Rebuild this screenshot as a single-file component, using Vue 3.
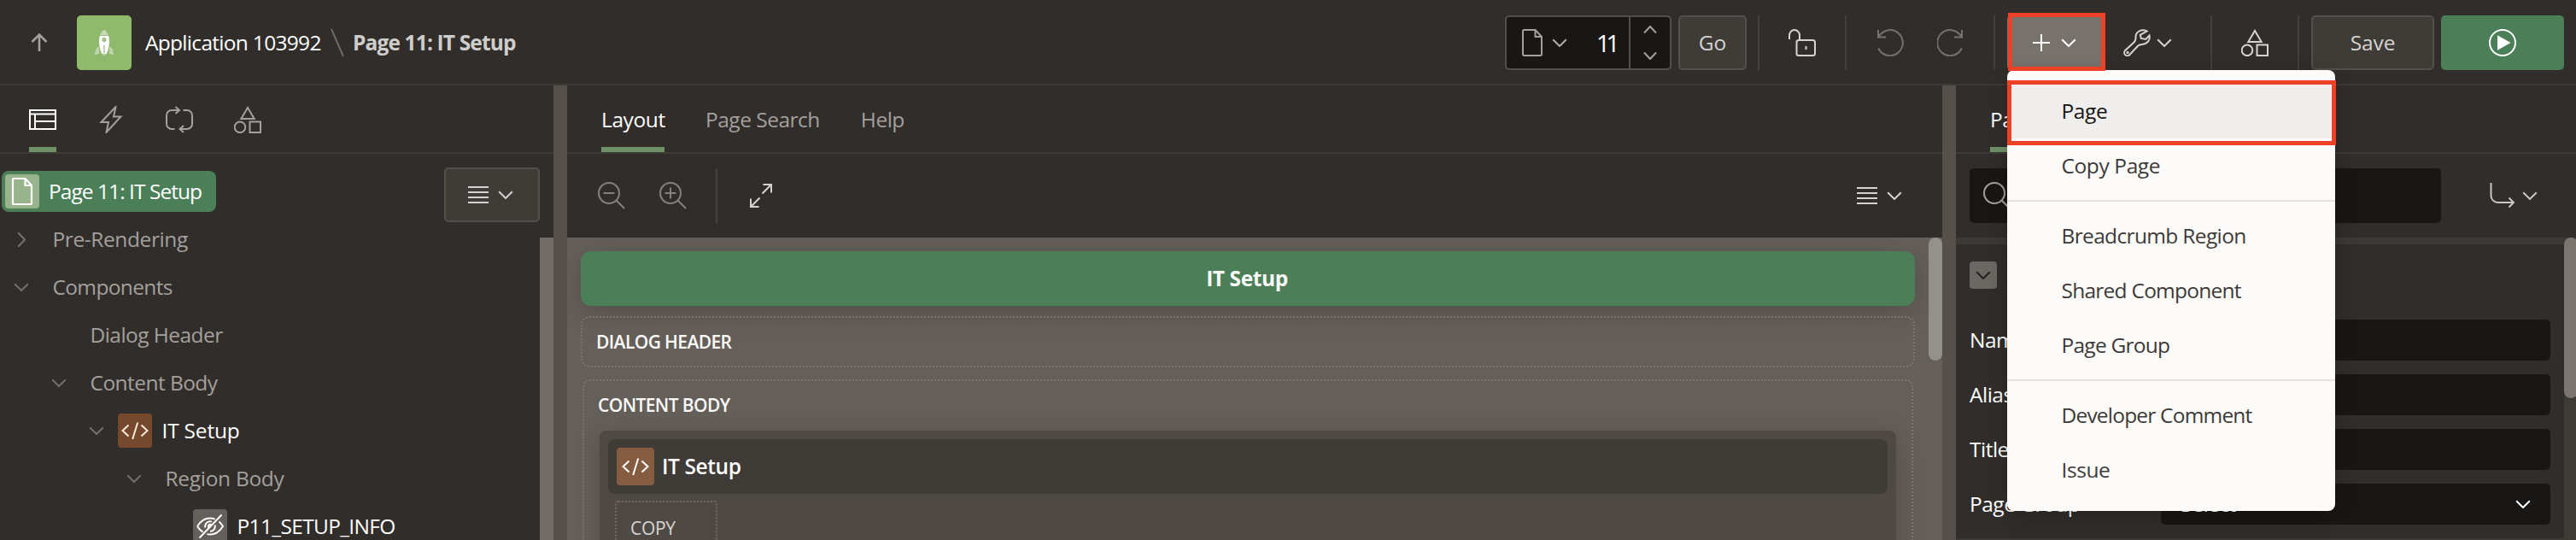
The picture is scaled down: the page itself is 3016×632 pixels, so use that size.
<script setup>
import { h } from 'vue'

const glyphs = {
  up: '<path d="M10 21V2M1.5 10 10 1.5l8.5 8.5"/>',
  down: '<path d="M1.2 1.2 9 9l7.8-7.8"/>',
  right: '<path d="M1.2 1.2 9 9.5l-7.8 8.3"/>',
  layout: '<path d="M1 5h30v22H1zM1 9.5h30M7 9.5V27M7 18h24"/>',
  bolt: '<path d="M21.5 1 4.5 19H13l-2.5 12L27.5 12.5H19z"/>',
  cycle: '<path d="M10.5 27H7a6 6 0 0 1-6-6V11a6 6 0 0 1 6-6h9M11.5 1 16 5l-4.5 4M20.5 5H25a6 6 0 0 1 6 6v10a6 6 0 0 1-6 6h-8.5M21 23l-4.5 4 4.5 4"/>',
  shapes: '<path d="M16 2 8.3 15h15.4zM18.500 18.500H31V31H18.500z"/><circle cx="7" cy="24.800" r="6.300"/>',
  page: '<path d="M19.500 1H6.200A1.200 1.200 0 0 0 5 2.200v27.600A1.200 1.200 0 0 0 6.200 31h19.600a1.200 1.200 0 0 0 1.200-1.200V9zM19.500 1v8H27"/>',
  lines: '<path d="M0 7h24M0 13h24M0 19h24M0 25h24"/>',
  unlock: '<path d="M1 12V7.500a6 6.500 0 0 1 12 0V13M20.500 20v4"/><rect x="9.500" y="13" width="21.500" height="18" rx="2.500"/>',
  undo: '<path d="M1 1v8.500h9M1.600 9A15 15 0 1 1 1.200 22.500"/>',
  redo: '<path d="M29 1v8.500h-9M28.400 9A15 15 0 1 0 28.800 22.500"/>',
  plus: '<path d="M10 0v20M0 10h20"/>',
  wrench: '<path d="M27.500 2.500C22 -.5 14 2.500 14.500 10c.2 3-.5 4-2 5.500L2.200 25a3.600 3.600 0 0 0 5 5.200L17 19.800c1.500-1.500 2.500-1.800 5-1.900 6.500-.3 9.800-5.400 8.500-10.400L26.200 12l-5.400-1-1-4.200z"/><circle cx="5" cy="27.500" r=".7"/>',
  play: '<circle cx="16" cy="16" r="15"/><path d="M11 9v14l12.500-7z" fill="currentColor"/>',
  zoomOut: '<circle cx="13" cy="13" r="12"/><path d="M21.800 21.800 31 31M6.500 13h13"/>',
  zoomIn: '<circle cx="13" cy="13" r="12"/><path d="M21.800 21.800 31 31M6.500 13h13M13 6.500v13"/>',
  search: '<circle cx="13" cy="13" r="12"/><path d="M21.800 21.800 31 31"/>',
  expand: '<path d="M17.500 13.500 28 3M18.500 3H28v9.500M14.500 18.500 4 29M4 19.500V29h9.500"/>',
  code: '<path d="M8.500 9.500 1.500 16l7 6.500M23.500 9.500l7 6.500-7 6.500M19.200 6.500l-6 19.500"/>',
  hidden: '<path d="M1 16C5 9.500 10 6.500 16 6.500c2 0 4 .4 5.700 1.100M26.500 10.500c1.700 1.500 3.200 3.300 4.500 5.500-4 6.500-9 9.500-15 9.500-1.200 0-2.400-.1-3.500-.4M7.500 22.700C5 21.200 2.800 18.900 1 16M21.600 14.500A5.800 5.800 0 0 1 16 21.800M10.400 17.500A5.800 5.800 0 0 1 18 10.600M14.600 17.600a2 2 0 0 1 2.600-3.100M3.500 29.500l26-27"/>',
  goto: '<path d="M1.500 1v15a8 8 0 0 0 8 8H28M22.500 18.500 28 24l-5.500 5.500"/>'
}
const sizes = { up: [20, 22], down: [18, 10], right: [10, 19], plus: [20, 20], lines: [24, 32] }
const Icon = ({ name }) => {
  const [w, ht] = sizes[name] || [32, 32]
  return h('svg', {
    width: w, height: ht, viewBox: `0 0 ${w} ${ht}`, fill: 'none', stroke: 'currentColor',
    'stroke-width': 2, innerHTML: glyphs[name]
  })
}
Icon.props = ['name']

// indent: left edge of the disclosure arrow column; ls: tracking in px
const tree = [
  { label: 'Pre-Rendering', indent: 8, arrow: 'right', ls: -0.4 },
  { label: 'Components', indent: 8, arrow: 'down', ls: -0.65 },
  { label: 'Dialog Header', indent: 52, arrow: '', ls: -0.55 },
  { label: 'Content Body', indent: 52, arrow: 'down', ls: -0.55 },
  { label: 'IT Setup', indent: 96, arrow: 'down', icon: 'code', ls: -0.2 },
  { label: 'Region Body', indent: 140, arrow: 'down', ls: -0.3 },
  { label: 'P11_SETUP_INFO', indent: 184, arrow: '', icon: 'hidden', ls: -0.65 }
]
const menu = [
  [{ label: 'Page', ls: -0.4, active: true }, { label: 'Copy Page', ls: -0.4 }],
  [{ label: 'Breadcrumb Region', ls: -0.65 }, { label: 'Shared Component', ls: -0.75 }, { label: 'Page Group', ls: -0.75 }],
  [{ label: 'Developer Comment', ls: -0.8 }, { label: 'Issue', ls: -0.4 }]
]
const fields = [{ label: 'Name' }, { label: 'Alias' }, { label: 'Title' }, { label: 'Page Group', value: '- Select -' }]
</script>

<template>
  <div class="builder">
    <header class="topbar">
      <Icon name="up" class="up" />
      <span class="app-icon">
        <svg width="32" height="32" viewBox="0 0 32 32">
          <path d="M16 0c3 2.500 4.700 5 5.500 7.500h-11C11.300 5 13 2.500 16 0z" fill="#c7dab6" stroke="#7fa65e" stroke-width=".6" />
          <path d="M10 19c-3 2.500-5.500 5-5.700 12.500l6.700-2.500zM22 19c3 2.500 5.500 5 5.700 12.500L21 29zM13.500 27h5l-.5 4.500h-4z" fill="#bdd4a9" stroke="#7fa65e" stroke-width=".6" />
          <path d="M10.500 7.500h11C23 14 22.500 22 19 29.500h-6C9.500 22 9 14 10.500 7.500z" fill="#fff" stroke="#7fa65e" stroke-width=".6" />
          <circle cx="16" cy="12.500" r="2" fill="#b3cf9b" stroke="#7fa65e" />
          <path d="M16 19v9" stroke="#7fa65e" />
        </svg>
      </span>
      <span class="app-name">Application 103992</span>
      <svg class="slash" width="16" height="34" viewBox="0 0 16 34"><path d="M1 1l14 32" /></svg>
      <span class="page-name">Page 11: IT Setup</span>

      <div class="tools">
        <div class="selector">
          <Icon name="page" /><Icon name="down" class="sel-caret" />
          <span class="num">11</span>
          <div class="spin"><svg width="16" height="40" viewBox="0 0 16 40"><path d="M1 8.500 8 1l7 7.500M1 31.500 8 39l7-7.500" /></svg></div>
        </div>
        <button class="btn go">Go</button>
        <div class="seg lock"><Icon name="unlock" /></div>
        <div class="seg history"><Icon name="undo" /><Icon name="redo" /></div>
        <div class="seg create">
          <button class="plus"><Icon name="plus" /><Icon name="down" /></button>
          <Icon name="wrench" class="wrench" /><Icon name="down" />
        </div>
        <div class="seg shared"><Icon name="shapes" /></div>
        <div class="seg actions">
          <button class="btn save">Save</button>
          <button class="run"><Icon name="play" /></button>
        </div>
      </div>
    </header>

    <main class="panes">
      <section class="pane left">
        <nav class="tabs icons">
          <span class="tab on"><Icon name="layout" /></span>
          <span class="tab"><Icon name="bolt" /></span>
          <span class="tab"><Icon name="cycle" /></span>
          <span class="tab"><Icon name="shapes" /></span>
        </nav>
        <div class="tree-area">
          <div class="tree-head">
            <div class="selected"><span class="badge doc"><Icon name="page" /></span>Page 11: IT Setup</div>
            <button class="btn list"><Icon name="lines" /><Icon name="down" /></button>
          </div>
          <div v-for="n in tree" :key="n.label" class="node" :class="{ real: n.icon }" :style="{ paddingLeft: n.indent + 'px', letterSpacing: n.ls + 'px' }">
            <span class="arrow"><Icon v-if="n.arrow" :name="n.arrow" /></span>
            <span v-if="n.icon" class="badge" :class="n.icon"><Icon :name="n.icon" /></span>
            <span class="label">{{ n.label }}</span>
          </div>
          <div class="left-scroll"></div>
        </div>
      </section>

      <div class="splitter"></div>

      <section class="pane center">
        <nav class="tabs">
          <span class="tab on layout-tab">Layout</span>
          <span class="tab">Page Search</span>
          <span class="tab">Help</span>
        </nav>
        <div class="toolbar">
          <Icon name="zoomOut" class="dim" /><Icon name="zoomIn" class="dim" />
          <i class="rule"></i>
          <Icon name="expand" />
          <span class="view"><Icon name="lines" /><Icon name="down" /></span>
        </div>
        <div class="canvas">
          <div class="stage">
            <div class="title-bar">IT Setup</div>
            <div class="slot-box head">DIALOG HEADER</div>
            <div class="slot-box body">
              <div class="slot-name">CONTENT BODY</div>
              <div class="region">
                <div class="region-head"><span class="badge region-icon"><Icon name="code" /></span>IT Setup</div>
                <div class="copy">COPY</div>
              </div>
            </div>
          </div>
          <div class="canvas-thumb"></div>
        </div>
      </section>

      <div class="splitter"></div>

      <section class="pane props">
        <nav class="tabs"><span class="tab on">Page</span></nav>
        <div class="prop-bar">
          <div class="search"><Icon name="search" /></div>
          <span class="jump"><Icon name="goto" /><Icon name="down" /></span>
        </div>
        <div class="prop-area">
          <div class="prop-list">
            <div class="band"></div>
            <div class="group"><span class="collapse"><Icon name="down" /></span></div>
            <div v-for="f in fields" :key="f.label" class="field">
              <label>{{ f.label }}</label>
              <div class="input"><template v-if="f.value">{{ f.value }}<Icon name="down" class="input-caret" /></template></div>
            </div>
            <div class="band next"></div>
          </div>
          <div class="prop-track"><div class="prop-thumb"></div></div>
        </div>
      </section>
    </main>

    <div class="menu">
      <div v-for="(g, i) in menu" :key="i" class="menu-group">
        <div v-for="m in g" :key="m.label" class="item" :class="{ active: m.active }" :style="{ letterSpacing: m.ls + 'px' }">{{ m.label }}</div>
      </div>
    </div>
    <div class="mark mark-button"></div>
    <div class="mark mark-item"></div>
  </div>
</template>

<style>
body { margin: 0; background: #312d2a; }
</style>

<style scoped>
* { box-sizing: border-box; }
svg { display: block; flex: none; }
.builder {
  position: relative; width: 3016px; height: 632px; overflow: hidden;
  display: flex; flex-direction: column; background: #312d2a; color: #d5d3d1;
  font: 400 24.5px/34px "Open Sans", "Noto Sans", sans-serif; letter-spacing: -0.5px;
}
button { font: inherit; letter-spacing: inherit; color: inherit; padding: 0; }

.topbar { height: 100px; flex: none; display: flex; align-items: center; border-bottom: 2px solid #3e3a37; padding: 2px 14px 0 36px; }
.up { color: #a3a09d; stroke-width: 2.6; }
.app-icon { width: 64px; height: 64px; margin-left: 34px; border-radius: 5px; background: #8fba6c; display: grid; place-items: center; }
.app-name { margin-left: 16px; width: 217px; color: #fff; letter-spacing: -0.7px; font-weight: 500; white-space: nowrap; }
.slash { fill: none; stroke: #6e6966; stroke-width: 2; }
.page-name { margin-left: 10px; font-weight: 700; letter-spacing: -0.85px; color: #cfcdcb; }
.tools { margin-left: auto; display: flex; align-items: center; height: 64px; }
.selector { width: 195px; height: 64px; border: 2px solid #544f4a; border-radius: 5px; background: #191715; display: flex; align-items: center; padding-left: 14px; color: #a3a09d; }
.sel-caret { margin-left: 7px; color: #b0adaa; }
.num { margin-left: 34px; width: 39px; font-size: 28px; font-weight: 500; color: #fff; letter-spacing: -4.5px; }
.spin { margin-left: auto; width: 49px; height: 60px; border-left: 2px solid #544f4a; display: grid; place-items: center; }
.spin svg { fill: none; stroke: #a3a09d; stroke-width: 2; }
.btn { height: 64px; border: 2px solid #544f4a; border-radius: 5px; background: #3f3b36; font-weight: 500; letter-spacing: -0.1px; }
.go { width: 80px; margin-left: 8px; }
.seg { height: 64px; display: flex; align-items: center; border-left: 2px solid #423e3a; }
.lock { margin-left: 13px; width: 102px; padding-left: 34px; }
.history { width: 174px; padding-left: 36px; gap: 38px; color: #75716e; }
.create { width: 254px; padding-left: 14px; }
.plus { width: 114px; height: 64px; border: 0; border-radius: 5px; background: #78726d; color: #fff; display: flex; align-items: center; gap: 13px; padding-left: 30px; }
.wrench { margin: 0 7px 0 22px; }
.shared { width: 102px; padding-left: 34px; }
.actions { width: 312px; padding-left: 14px; gap: 8px; }
.save { width: 144px; }
.run { width: 144px; height: 64px; border: 0; border-radius: 5px; background: #4b7f58; color: #fff; display: grid; place-items: center; }

.panes { flex: 1; min-height: 0; display: grid; grid-template-columns: 648px 16px 1610px 16px 726px; }
.pane { min-width: 0; min-height: 0; display: flex; flex-direction: column; }
.splitter { background: #56504b; }
.tabs { height: 80px; flex: none; display: flex; border-bottom: 2px solid #3e3a37; padding-left: 40px; gap: 48px; color: #a3a09d; }
.tabs.icons { padding-left: 34px; }
.tab { height: 78px; display: flex; align-items: center; padding-top: 2px; }
.tab.on { color: #fff; border-bottom: 6px solid #6f9167; padding-top: 8px; font-weight: 500; letter-spacing: -0.4px; }
.layout-tab { width: 74px; }

.tree-area { flex: 1; min-height: 0; position: relative; padding-top: 16px; overflow: hidden; }
.tree-head { height: 56px; display: flex; padding: 0 16px 0 2px; justify-content: space-between; }
.selected { margin-top: 4px; height: 48px; width: 251px; border-radius: 8px; background: #4b7f58; color: #fff; display: flex; align-items: center; gap: 11px; padding-left: 4px; font-weight: 500; letter-spacing: -0.95px; white-space: nowrap; }
.badge { width: 40px; height: 40px; border-radius: 4px; display: grid; place-items: center; flex: none; }
.doc { background: #98b48d; color: #fff; }
.doc svg { stroke-width: 2.2; }
.list { width: 112px; display: flex; align-items: center; gap: 11px; padding-left: 26px; position: relative; z-index: 1; }
.node { height: 56px; display: flex; align-items: center; color: #a3a09d; white-space: nowrap; }
.real { color: #fff; font-weight: 500; }
.arrow { width: 34px; display: grid; place-items: center; color: #75706c; }
.label { margin-left: 19.5px; }
.badge + .label { margin-left: 11.5px; }
.node .badge { margin-left: 8px; }
.badge.code { background: #76492f; color: #f6ead9; }
.badge.hidden { background: #64605b; }
.left-scroll { position: absolute; right: 0; top: 98px; bottom: 0; width: 16px; background: #716c68; }

.toolbar { height: 98px; flex: none; display: flex; align-items: center; padding: 0 47px 0 36px; }
.dim { color: #85817e; }
.dim + .dim { margin-left: 40px; }
.rule { width: 2px; height: 64px; margin: 0 35px 0 34px; background: #45413d; }
.view { margin-left: auto; display: flex; align-items: center; gap: 11px; }
.canvas { flex: 1; min-height: 0; background: #655f5a; padding: 16px 32px 0 16px; position: relative; overflow: hidden; }
.title-bar { height: 64px; border-radius: 12px; background: #4b7f58; color: #fbf9f8; font-weight: 700; letter-spacing: -0.4px; display: grid; place-items: center; box-shadow: 0 8px 32px rgba(0,0,0,.17); padding-right: 2px; }
.slot-box { border: 2px dotted #7b7671; position: relative; font-size: 21px; line-height: 30px; font-weight: 600; letter-spacing: -0.6px; color: #fbf9f8; }
.head { margin-top: 12px; height: 60px; border-radius: 10px; padding: 13px 0 0 16px; }
.body { margin: 14px 2px 0; height: 300px; border-radius: 8px; padding: 13px 18px 0; }
.slot-name { height: 45px; margin-left: -2px; }
.region { height: 240px; position: relative; border-radius: 8px; background: #4f4945; padding: 10px 10px 0; box-shadow: 0 8px 32px rgba(0,0,0,.2); }
.region-head { height: 64px; border-radius: 8px; background: #3f3b36; display: flex; align-items: center; gap: 9px; padding-left: 10px; font-size: 24.5px; letter-spacing: -0.4px; color: #fff; }
.region-icon { width: 44px; height: 44px; background: #855c3f; color: #fff; }
.copy { width: 120px; height: 90px; margin: 8px 0 0 8px; border: 2px dotted #6f6a66; border-radius: 4px; padding: 15px 0 0 16px; font-weight: 400; letter-spacing: -0.3px; color: #d8d5d2; }
.canvas-thumb { position: absolute; right: 0; top: 0; width: 16px; height: 144px; border-radius: 8px; background: #94908c; }

.prop-bar { height: 98px; flex: none; display: flex; align-items: center; padding: 0 45px 0 16px; justify-content: space-between; }
.search { width: 552px; height: 64px; border-radius: 5px; background: #191715; color: #a3a09d; display: flex; align-items: center; padding-left: 16px; }
.jump { display: flex; align-items: center; gap: 6px; color: #c9c6c3; }
.prop-area { flex: 1; min-height: 0; display: flex; }
.prop-list { flex: 1; }
.band { height: 8px; background: #3c3834; }
.group { height: 88px; padding: 20px 16px 0; }
.collapse { width: 32px; height: 32px; border-radius: 4px; background: #6b6763; color: #24211f; display: grid; place-items: center; }
.field { height: 64px; display: flex; padding: 0 16px; color: #fff; font-weight: 500; }
.field label { width: 224px; line-height: 48px; }
.input { width: 456px; height: 48px; border-radius: 5px; background: #191715; line-height: 48px; padding-left: 10px; position: relative; }
.input-caret { position: absolute; right: 23px; top: 19px; }
.prop-track { width: 14px; background: #3e3a36; }
.prop-thumb { height: 188px; width: 16px; border-radius: 8px; background: #7a7571; }

.menu { position: absolute; left: 2350px; top: 82px; width: 384px; height: 516px; padding-top: 16px; border-radius: 8px; background: #fcfbf9; color: #3d3a38; box-shadow: 0 6px 24px rgba(0,0,0,.22); }
.menu-group + .menu-group { margin-top: 8px; border-top: 2px solid #e4e3e1; padding-top: 8px; }
.item { height: 64px; line-height: 64px; padding-left: 63.5px; }
.item.active { background: #f0eeec; color: #161513; }
.mark { position: absolute; border: 5px solid #ec4126; }
.mark-button { left: 2351px; top: 15px; width: 114px; height: 68px; }
.mark-item { left: 2350px; top: 94px; width: 385px; height: 76px; }
</style>
